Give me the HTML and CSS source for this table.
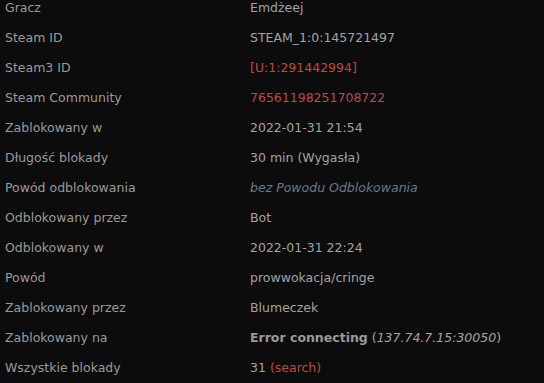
FILE: index.html
```html
<!DOCTYPE html>
<html>
<head>
    <title>Blokada</title>
    <link rel="stylesheet" href="styles.css">
</head>
<body>
    <!-- szczegoly blokady -->
    <table class="ban">
        <tr><td class="label">Gracz</td><td>Emdżeej</td></tr>
        <tr><td class="label">Steam ID</td><td>STEAM_1:0:145721497</td></tr>
        <tr><td class="label">Steam3 ID</td><td><a href="#">[U:1:291442994]</a></td></tr>
        <tr><td class="label">Steam Community</td><td><a href="#">76561198251708722</a></td></tr>
        <tr><td class="label">Zablokowany w</td><td>2022-01-31 21:54</td></tr>
        <tr><td class="label">Długość blokady</td><td>30 min (Wygasła)</td></tr>
        <tr><td class="label">Powód odblokowania</td><td class="none">bez Powodu Odblokowania</td></tr>
        <tr><td class="label">Odblokowany przez</td><td>Bot</td></tr>
        <tr><td class="label">Odblokowany w</td><td>2022-01-31 22:24</td></tr>
        <tr><td class="label">Powód</td><td>prowwokacja/cringe</td></tr>
        <tr><td class="label">Zablokowany przez</td><td>Blumeczek</td></tr>
        <tr><td class="label">Zablokowany na</td><td><b>Error connecting</b> (<i>137.74.7.15:30050</i>)</td></tr>
        <tr><td class="label">Wszystkie blokady</td><td>31 <a href="#">(search)</a></td></tr>
    </table>
</body>
</html>
```

FILE: styles.css
```css
/*tlo i czcionka*/
body{
    margin: 0;
    background-color: #0c0c0c;
    font-family: "DejaVu Sans", Verdana, sans-serif;
    font-size: 12.5px;
    color: #a3a3a3;
}

/*tabela*/
table.ban{
    width: 100%;
    border-collapse: collapse;
    margin-top: -8px;
}
table.ban td{
    height: 30px;
    padding: 0 0 0 5px;
    vertical-align: middle;
    white-space: nowrap;
}
table.ban td.label{
    width: 240px;
    color: #9a9a9a;
}
table.ban a{
    color: #bd4b40;
    text-decoration: none;
}
table.ban td.none{
    font-style: italic;
    color: #6b7886;
}
table.ban b{
    color: #9a9a9a;
}
```
